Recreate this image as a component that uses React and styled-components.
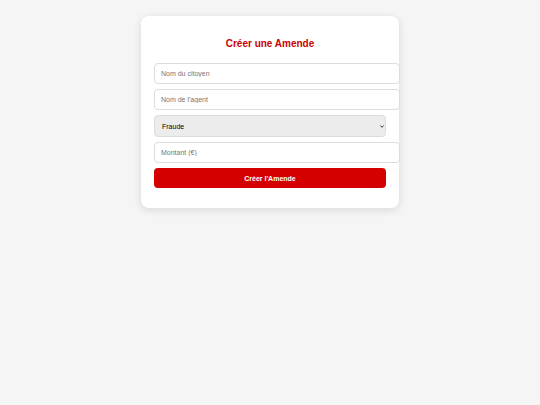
import React from "react";
import styled, { createGlobalStyle } from "styled-components";

const GlobalStyle = createGlobalStyle`
  html, body {
    margin: 0;
    padding: 0;
    background: #f5f5f5;
    font-family: "Liberation Sans", Arial, sans-serif;
  }
`;

const Page = styled.div`
  min-height: 405px;
  padding-top: 16px;
  box-sizing: border-box;
`;

const Card = styled.div`
  width: 258px;
  margin: 0 auto;
  box-sizing: border-box;
  padding: 13px 13px 20px;
  background: #fff;
  border-radius: 8px;
  box-shadow: 0 2px 8px rgba(0, 0, 0, 0.12);
`;

const Title = styled.h2`
  margin: 9px 0 13px;
  text-align: center;
  font-size: 10px;
  line-height: 12px;
  font-weight: bold;
  color: #cc0000;
`;

const Form = styled.form`
  display: flex;
  flex-direction: column;
  gap: 5px;
`;

const Input = styled.input`
  display: block;
  box-sizing: content-box;
  width: 100%;
  height: 9px;
  margin: 0;
  padding: 5px 6px;
  border: 1px solid #dcdcdc;
  border-radius: 4px;
  background: #fff;
  font-family: "Liberation Sans", Arial, sans-serif;
  font-size: 7px;
  color: #222;
  outline: none;
  &::placeholder {
    color: #767676;
  }
`;

const SelectWrap = styled.div`
  position: relative;
`;

const Select = styled.select`
  display: block;
  box-sizing: border-box;
  width: 100%;
  height: 22px;
  margin: 0;
  padding: 0 12px 0 7px;
  border: 1px solid #dcdcdc;
  border-radius: 4px;
  background: #ececec;
  font-family: "Liberation Sans", Arial, sans-serif;
  font-size: 7px;
  color: #000;
  appearance: none;
  -webkit-appearance: none;
  outline: none;
`;

const Chevron = styled.svg`
  position: absolute;
  right: 2px;
  top: 10px;
  width: 4px;
  height: 3px;
  pointer-events: none;
`;

const Button = styled.button`
  display: block;
  box-sizing: border-box;
  width: 100%;
  height: 20px;
  margin: 0;
  border: none;
  border-radius: 4px;
  background: #d40000;
  color: #fff;
  font-family: "Liberation Sans", Arial, sans-serif;
  font-size: 7px;
  font-weight: bold;
  cursor: pointer;
`;

const App = () => {
  return (
    <>
      <GlobalStyle />
      <Page>
        <Card>
          <Title>Créer une Amende</Title>
          <Form onSubmit={(e) => e.preventDefault()}>
            <Input type="text" placeholder="Nom du citoyen" />
            <Input type="text" placeholder="Nom de l'agent" />
            <SelectWrap>
              <Select defaultValue="Fraude">
                <option>Fraude</option>
                <option>Vol</option>
                <option>Excès de vitesse</option>
              </Select>
              <Chevron viewBox="0 0 4 3">
                <path d="M0.4 0.5 L2 2.3 L3.6 0.5" fill="none" stroke="#222" strokeWidth="0.9" />
              </Chevron>
            </SelectWrap>
            <Input type="number" placeholder="Montant (€)" />
            <Button type="submit">Créer l'Amende</Button>
          </Form>
        </Card>
      </Page>
    </>
  );
};

export default App;
